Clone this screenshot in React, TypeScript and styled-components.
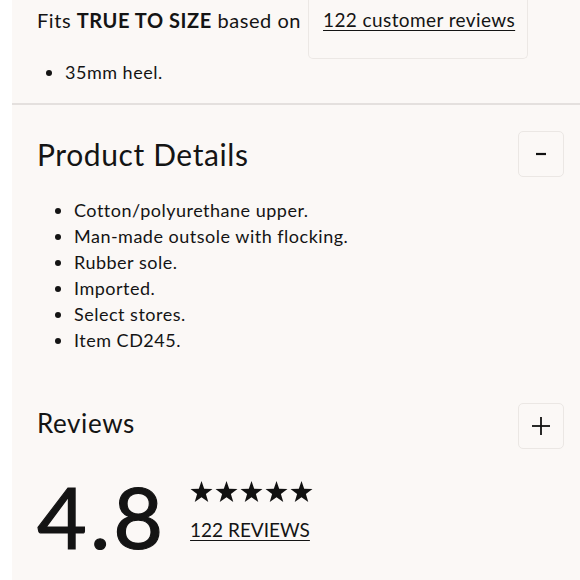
import * as React from "react";
import styled, { createGlobalStyle } from "styled-components";

const Global = createGlobalStyle`
  html, body {
    margin: 0;
    padding: 0;
    background: #ffffff;
  }
  body {
    font-family: "Lato", "Open Sans", sans-serif;
    color: #141414;
  }
`;

const Panel = styled.div`
  margin-left: 12px;
  background: #fbf8f6;
  min-height: 580px;
  overflow: hidden;
`;

const Section = styled.section<{ $pad?: string }>`
  padding: ${(p) => p.$pad || "0"};
  padding-left: 25px;
  padding-right: 16px;
`;

const FitRow = styled.div`
  display: flex;
  align-items: flex-start;
  height: 59px;
`;

const FitText = styled.span`
  font-size: 20px;
  line-height: 40px;
  letter-spacing: 0.55px;
  margin-right: 7px;
  & b {
    font-weight: 700;
  }
`;

const ReviewBox = styled.div`
  border: 1px solid #ece8e5;
  border-top: none;
  border-radius: 0 0 5px 5px;
  height: 58px;
  padding: 0 12px 0 14px;
`;

const UnderLink = styled.a<{ $size?: number; $ls?: number }>`
  color: #141414;
  font-size: ${(p) => p.$size || 19}px;
  line-height: 40px;
  text-decoration: underline;
  text-underline-offset: 3px;
  text-decoration-thickness: 1px;
  letter-spacing: ${(p) => p.$ls ?? 0.4}px;
`;

const Bullets = styled.ul<{ $indent: number }>`
  margin: 0;
  padding-left: ${(p) => p.$indent}px;
  font-size: 18px;
  line-height: 26px;
  letter-spacing: 0.5px;
`;

const Divider = styled.hr`
  margin: 0;
  border: none;
  border-top: 2px solid #e4e0de;
`;

const Header = styled.div`
  display: flex;
  align-items: center;
  justify-content: space-between;
  height: 46px;
`;

const Title = styled.h2<{ $size: number; $lift?: number }>`
  margin: 0;
  margin-bottom: ${(p) => p.$lift || 0}px;
  font-weight: 400;
  font-size: ${(p) => p.$size}px;
  letter-spacing: 0.6px;
`;

const ToggleButton = styled.button`
  width: 46px;
  height: 46px;
  border: 1px solid #ebe7e4;
  border-radius: 5px;
  background: #fbf8f6;
  display: flex;
  align-items: center;
  justify-content: center;
  padding: 0;
  color: #141414;
`;

const RatingRow = styled.div`
  display: flex;
  align-items: flex-start;
  gap: 24px;
  margin-top: 24px;
`;

const Score = styled.div`
  font-size: 86px;
  line-height: 86px;
  font-weight: 400;
  letter-spacing: 3px;
  -webkit-text-stroke: 1.2px #141414;
`;

const RatingMeta = styled.div`
  display: flex;
  flex-direction: column;
  padding-top: 8px;
`;

const Stars = styled.div`
  display: flex;
  gap: 2px;
  margin-bottom: 8px;
`;

const Star = () => (
  <svg width="23" height="21" viewBox="0 0 24 22">
    <polygon
      points="12,0 14.8,8.2 23.5,8.4 16.6,13.7 19.1,22 12,17 4.9,22 7.4,13.7 0.5,8.4 9.2,8.2"
      fill="#111"
    />
  </svg>
);

const Minus = () => (
  <svg width="12" height="12" viewBox="0 0 12 12">
    <line x1="1" y1="6" x2="11" y2="6" stroke="#111" strokeWidth="2.2" />
  </svg>
);

const Plus = () => (
  <svg width="20" height="20" viewBox="0 0 20 20">
    <line x1="1" y1="10" x2="19" y2="10" stroke="#111" strokeWidth="1.8" />
    <line x1="10" y1="1" x2="10" y2="19" stroke="#111" strokeWidth="1.8" />
  </svg>
);

const details = [
  "Cotton/polyurethane upper.",
  "Man-made outsole with flocking.",
  "Rubber sole.",
  "Imported.",
  "Select stores.",
  "Item CD245.",
];

export default function App() {
  return (
    <>
      <Global />
      <Panel>
        <Section $pad="0 0 18px 0">
          <FitRow>
            <FitText>
              Fits <b>TRUE TO SIZE</b> based on
            </FitText>
            <ReviewBox>
              <UnderLink href="#">122 customer reviews</UnderLink>
            </ReviewBox>
          </FitRow>
          <Bullets $indent={28}>
            <li>35mm heel.</li>
          </Bullets>
        </Section>
        <Divider />
        <Section $pad="26px 0 0 0">
          <Header>
            <Title $size={30}>Product Details</Title>
            <ToggleButton aria-label="collapse">
              <Minus />
            </ToggleButton>
          </Header>
          <Bullets $indent={37} style={{ marginTop: 20 }}>
            {details.map((d) => (
              <li key={d}>{d}</li>
            ))}
          </Bullets>
        </Section>
        <Section $pad="50px 0 0 0">
          <Header>
            <Title $size={26} $lift={6}>
              Reviews
            </Title>
            <ToggleButton aria-label="expand">
              <Plus />
            </ToggleButton>
          </Header>
          <RatingRow>
            <Score>4.8</Score>
            <RatingMeta>
              <Stars>
                {[0, 1, 2, 3, 4].map((i) => (
                  <Star key={i} />
                ))}
              </Stars>
              <UnderLink href="#" $size={19} $ls={0}>
                122 REVIEWS
              </UnderLink>
            </RatingMeta>
          </RatingRow>
        </Section>
      </Panel>
    </>
  );
}
